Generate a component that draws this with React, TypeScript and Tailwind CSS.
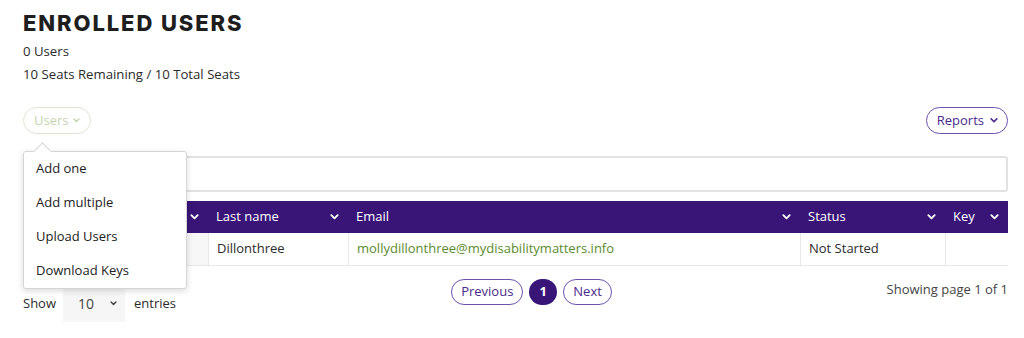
import React from "react";

const Chev = ({ className = "" }: { className?: string }) => (
  <svg viewBox="0 0 10 6" className={className} fill="none">
    <polyline points="1.5,1 5,4.5 8.5,1" stroke="currentColor" strokeWidth="2" strokeLinecap="round" strokeLinejoin="round" />
  </svg>
);

const Th = ({ label }: { label: string }) => (
  <div className="flex items-center justify-between pl-2 pr-[9px] text-white">
    <span>{label}</span>
    <Chev className="w-[9px] h-[6px]" />
  </div>
);

export default function App() {
  return (
    <div
      className="w-[1024px] h-[338px] bg-white pl-[23px] pr-4 text-[13px] text-[#2b2b2b] relative overflow-hidden"
      style={{ fontFamily: '"Open Sans", "Liberation Sans", sans-serif' }}
    >
      <h1
        className="pt-[10px] text-[22px] leading-[26px] font-extrabold text-[#1e1e1e] tracking-[1.9px]"
        style={{ fontFamily: 'Inter, "Liberation Sans", sans-serif' }}
      >
        ENROLLED USERS
      </h1>
      <div className="mt-[5px] leading-[20px] text-[13.2px]">0 Users</div>
      <div className="mt-[3px] leading-[20px] text-[13.2px]">10 Seats Remaining / 10 Total Seats</div>

      <div className="mt-[23px] flex items-center justify-between">
        <button className="h-[27px] px-[10px] rounded-full border border-[#dbe6cf] text-[#c3d5b0] flex items-center gap-[5px]">
          <span>Users</span>
          <Chev className="w-[7px] h-[5px]" />
        </button>
        <button className="h-[27px] pl-[10px] pr-[9px] rounded-full border border-[#6d51ad] text-[#4a2a8c] flex items-center gap-[6px]">
          <span>Reports</span>
          <Chev className="w-[8px] h-[5px]" />
        </button>
      </div>

      <div className="mt-[22px] h-[36px] border-2 border-[#e2e2e2] rounded-[3px]" />

      <div className="mt-[9px]">
        <div className="grid grid-cols-[185px_140px_452px_145px_1fr] h-[32px] bg-[#391578] items-stretch">
          <Th label="" />
          <Th label="Last name" />
          <Th label="Email" />
          <Th label="Status" />
          <Th label="Key" />
        </div>
        <div className="grid grid-cols-[185px_140px_452px_145px_1fr] h-[33px] border-b border-[#e6e6e6] items-stretch">
          <div className="bg-[#f7f7f7]" />
          <div className="flex items-center pl-2 border-l border-[#e9e9e9]">Dillonthree</div>
          <div className="flex items-center pl-2 border-l border-[#e9e9e9] text-[#5a8b2c]">
            mollydillonthree@mydisabilitymatters.info
          </div>
          <div className="flex items-center pl-2 border-l border-[#e9e9e9]">Not Started</div>
          <div className="border-l border-[#e9e9e9]" />
        </div>
      </div>

      <div className="grid grid-cols-3">
        <div className="mt-[19px] flex items-center">
          <span>Show</span>
          <div className="ml-[7px] w-[62px] h-[37px] bg-[#f6f6f6] flex items-center justify-between pl-[15px] pr-[8px] text-[#444]">
            <span className="text-[14px]">10</span>
            <Chev className="w-[7px] h-[5px]" />
          </div>
          <span className="ml-[9px]">entries</span>
        </div>
        <div className="mt-[13px] flex justify-center items-start gap-[6px] pl-[32px]">
          <button className="h-[26px] px-[9px] rounded-full border border-[#6d51ad] text-[#4a2a8c] flex items-center">
            Previous
          </button>
          <button className="h-[26px] w-[28px] rounded-full bg-[#391578] text-white font-bold flex items-center justify-center">
            1
          </button>
          <button className="h-[26px] px-[9px] rounded-full border border-[#6d51ad] text-[#4a2a8c] flex items-center">
            Next
          </button>
        </div>
        <div className="mt-[13px] text-right leading-[20px] text-[#444]">Showing page 1 of 1</div>
      </div>

      {/* Dropdown menu */}
      <div className="absolute left-[23px] top-[151px] w-[164px] bg-white border border-[#d5d5d5] rounded-[3px] shadow-[0_2px_6px_rgba(0,0,0,0.15)]">
        <div className="absolute -top-[7px] left-[12px] w-[13px] h-[13px] bg-white border-l border-t border-[#d5d5d5] rotate-45" />
        {["Add one", "Add multiple", "Upload Users", "Download Keys"].map((t) => (
          <div key={t} className="relative h-[34px] flex items-center pl-3 text-[#222]">
            {t}
          </div>
        ))}
      </div>
    </div>
  );
}
